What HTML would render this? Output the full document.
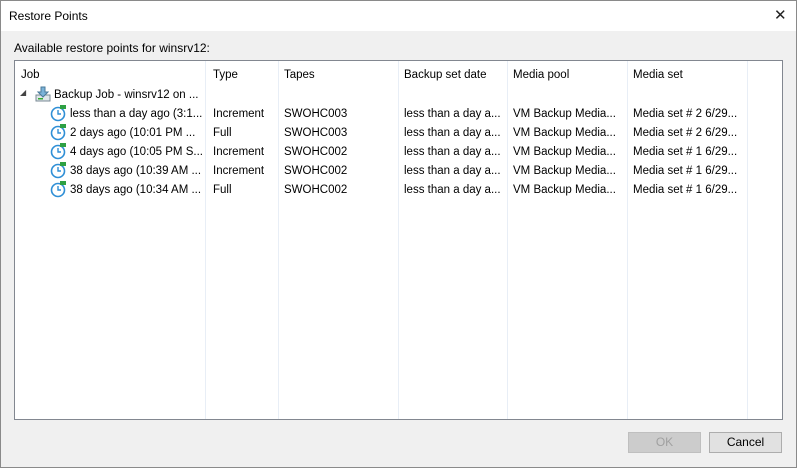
<!DOCTYPE html>
<html><head><style>
*{margin:0;padding:0;box-sizing:border-box}
body{width:797px;height:468px;background:#f0f0f0;font-family:"Liberation Sans",sans-serif;font-size:11.5px;color:#000;position:relative;overflow:hidden}
.frame{position:absolute;left:0;top:0;width:797px;height:468px;border:1px solid #8a8a8a;pointer-events:none}
.title{position:absolute;left:0;top:0;width:797px;height:31px;background:#fff}
.title span{position:absolute;left:9px;top:9px;font-size:12px}
.x{position:absolute;left:774px;top:6px;font-size:15px;font-weight:300;color:#222}
.lbl{position:absolute;left:14px;top:41px;font-size:12px}
.box{position:absolute;left:14px;top:60px;width:769px;height:360px;background:#fff;border:1px solid #828790}
.col{position:absolute;top:0;bottom:0;border-left:1px solid #e8eef6}
.t{position:absolute;white-space:nowrap}
.btn{position:absolute;top:432px;width:73px;height:21px;border:1px solid #adadad;background:#e1e1e1;text-align:center;line-height:19px;font-size:12px}
</style></head><body>
<div class="title"><span>Restore Points</span><div class="x">✕</div></div>
<div class="lbl">Available restore points for winsrv12:</div>
<div class="box">
<div class="col" style="left:190px"></div><div class="col" style="left:263px"></div><div class="col" style="left:383px"></div><div class="col" style="left:492px"></div><div class="col" style="left:612px"></div><div class="col" style="left:732px"></div>
<div class="t" style="left:6px;top:8px">Job</div>
<div class="t" style="left:198px;top:8px">Type</div>
<div class="t" style="left:269px;top:8px">Tapes</div>
<div class="t" style="left:389px;top:8px">Backup set date</div>
<div class="t" style="left:498px;top:8px">Media pool</div>
<div class="t" style="left:618px;top:8px">Media set</div>
<div class="t" style="left:5px;top:27px;font-size:8px;color:#444">◢</div>
<svg style="position:absolute;left:20px;top:25px" width="16" height="16"><rect x="1" y="9" width="14" height="6" fill="#dfe6ea" stroke="#7a8a94"/><rect x="3" y="12" width="5" height="1.5" fill="#3a3"/><path d="M6 1h4v5h3l-5 5-5-5h3z" fill="#7ab2d8" stroke="#4a7a9a"/></svg>
<div class="t" style="left:39px;top:28px">Backup Job - winsrv12 on ...</div>
</div>
<div class="frame"></div>
<script>
var r=[["less than a day ago (3:1...","Increment","SWOHC003","Media set # 2 6/29..."],["2 days ago (10:01 PM ...","Full","SWOHC003","Media set # 2 6/29..."],["4 days ago (10:05 PM S...","Increment","SWOHC002","Media set # 1 6/29..."],["38 days ago (10:39 AM ...","Increment","SWOHC002","Media set # 1 6/29..."],["38 days ago (10:34 AM ...","Full","SWOHC002","Media set # 1 6/29..."]];
var b=document.querySelector('.box'),h='';
r.forEach(function(x,i){var y=47+i*19;
h+='<svg style="position:absolute;left:35px;top:'+(y-4)+'px" width="18" height="18"><circle cx="8" cy="10" r="6.5" fill="#fff" stroke="#2f8fd6" stroke-width="1.6"/><path d="M8 6v4h3" fill="none" stroke="#2f8fd6" stroke-width="1.4"/><rect x="10" y="1" width="6" height="4" fill="#2ea043"/></svg>';
h+='<div class="t" style="left:55px;top:'+y+'px">'+x[0]+'</div><div class="t" style="left:198px;top:'+y+'px">'+x[1]+'</div><div class="t" style="left:269px;top:'+y+'px">'+x[2]+'</div><div class="t" style="left:389px;top:'+y+'px">less than a day a...</div><div class="t" style="left:498px;top:'+y+'px">VM Backup Media...</div><div class="t" style="left:618px;top:'+y+'px">'+x[3]+'</div>';});
b.insertAdjacentHTML('beforeend',h);
</script>
<div class="btn" style="left:628px;background:#cccccc;border-color:#bfbfbf;color:#a0a0a0">OK</div>
<div class="btn" style="left:709px">Cancel</div>
</body></html>
